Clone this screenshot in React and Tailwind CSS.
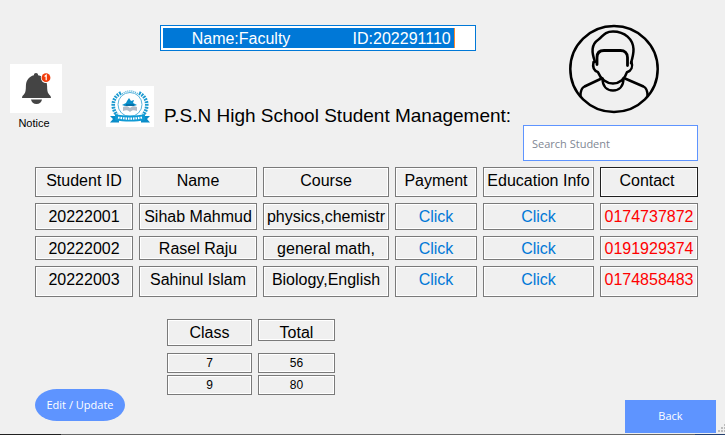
import React from "react";

const students = [
  { id: "20222001", name: "Sihab Mahmud", course: "physics,chemistr", contact: "0174737872", cell: "h-[27px] pt-[3px]" },
  { id: "20222002", name: "Rasel Raju", course: "general math, ", contact: "0191929374", cell: "h-[24px] pt-[2px]" },
  { id: "20222003", name: "Sahinul Islam", course: "Biology,English", contact: "0174858483", cell: "h-[31px] pt-[3px]" },
];

const classes = [
  { name: "7", total: "56" },
  { name: "9", total: "80" },
];

const box =
  "border border-[#7a7a7a] shadow-[inset_0_0_0_1px_#ffffff] text-center align-top font-normal whitespace-nowrap";

function Bell() {
  return (
    <svg viewBox="0 0 52 49" className="block h-[49px] w-[52px] bg-white" aria-hidden="true">
      <path
        d="M26 9c1.300 0 2 .9 2.100 2.300 5.500 1.200 8.900 5 9 10.700.1 4 .3 6 1.500 7.800.8 1.200 2.400 2.200 2.400 4.200H12c0-2 1.600-3 2.400-4.200 1.200-1.800 1.400-3.800 1.500-7.800.1-5.700 3.100-9.500 8-10.700C24 9.900 24.700 9 26 9Z"
        fill="#444"
      />
      <path d="M21 35.500h11c-.4 2.700-2.500 4.500-5.500 4.500S21.400 38.200 21 35.500Z" fill="#444" />
      <circle cx="36" cy="13.700" r="5.200" fill="#fff" />
      <circle cx="36" cy="13.700" r="4.400" fill="#f23c0a" />
      <path d="M34.600 12.500l1.600-1.200v4.900" stroke="#fff" strokeWidth="1.200" fill="none" />
    </svg>
  );
}

function Crest() {
  return (
    <svg viewBox="0 0 48 41" className="block h-[41px] w-[48px] shrink-0 bg-white" aria-hidden="true">
      <g fill="none" stroke="#1c9ad0">
        <circle cx="24" cy="18.500" r="12" strokeWidth="1" stroke="#58b4dc" />
        <path d="M15 7C6 11 5 22 11 29" strokeWidth="3.600" strokeDasharray="1.800 1" />
        <path d="M33 7c9 4 10 15 4 22" strokeWidth="3.600" strokeDasharray="1.800 1" />
        <path d="M16 8c5-4 11-4 16 0" strokeWidth="1.500" strokeDasharray="1 1" stroke="#58b4dc" />
      </g>
      <path d="M23 12l2 3 3-1-1 3 4 2-3 1H19l-3-1 4-2 1-2z" fill="#0a8fca" />
      <path d="M17 21c3-1 5-1 7 1 2-2 4-2 7-1v4c-3-1-5-1-7 1-2-2-4-2-7-1z" fill="#b3bcc8" />
      <path d="M20 18h8v2h-8z" fill="#0871a8" />
      <path d="M11 30H4l3 3-3 3.500h9V33zM37 30h7l-3 3 3 3.500h-9V33z" fill="#0a8cc8" />
      <path d="M9 28c9 2 21 2 30 0v6c-9 2-21 2-30 0z" fill="#119bd5" />
      <path d="M12 31.500c8 1.500 16 1.500 24 0" stroke="#fff" strokeWidth="2.200" strokeDasharray="1.600 .9" fill="none" />
    </svg>
  );
}

function Avatar() {
  return (
    <svg
      viewBox="0 0 90 90"
      className="ml-[7px] block h-[90px] w-[90px]"
      fill="none"
      stroke="#000"
      strokeWidth="2.500"
      strokeLinecap="round"
      strokeLinejoin="round"
      aria-hidden="true"
    >
      <ellipse cx="45" cy="45" rx="43.700" ry="43" />
      <path d="M26 38C22.500 28 22 20.500 29.500 15.500 34 12.500 35 7.500 44 7.500c12 0 20 8 20.500 17.500.2 5-1 9-2.500 14" />
      <path d="M28 40.500V33.500c0-5 3-7 7-7h16.500c4 0 7 2.500 7 7v8" strokeWidth="2.800" />
      <path d="M24.500 38c-1 4.500 0 8.500 4.500 10.200C31.500 55 38 59.500 44 59.500S56 55 58 48.200c4.500-1.500 6-5.700 4.500-10.200" />
      <path d="M33.500 54.500c0 8 4.500 12 10.500 12s10.500-4 10.500-12" />
      <path d="M32.500 54.500L15.500 62.500c-3 1.500-4 4-4 9M56 54.500L74.500 62.500c3 1.500 4 4 4 9" />
    </svg>
  );
}

function Grip() {
  return (
    <svg viewBox="0 0 7 9" className="mb-[2px] block h-[9px] w-[7px]" fill="#bcbcbc" aria-hidden="true">
      <path d="M0 7h2v2H0zM3 7h2v2H3zM6 7h1v2H6zM3 4h2v2H3zM6 4h1v2H6zM6 1h1v2H6z" />
    </svg>
  );
}

export default function App() {
  return (
    <div className="flex min-h-screen flex-col bg-[#f0f0f0] font-['Liberation_Sans',Arial,sans-serif] text-black">
      <header className="flex items-start pr-[27px] pl-[10px]">
        <div className="w-[52px] shrink-0 pt-[64px] text-center">
          <Bell />
          <p className="pt-[3px] pr-[4px] text-[11px] leading-[14px]">Notice</p>
        </div>

        <div className="ml-[44px] flex-1 pt-[25px]">
          <div className="ml-[54px] h-[26px] w-[316px] border border-[#0078d7] bg-white p-[2px]">
            <input
              aria-label="Faculty name and ID"
              readOnly
              defaultValue={"      Name:Faculty              ID:202291110"}
              className="block h-[20px] w-[292px] border-r border-[#ff8728] bg-[#0078d7] pt-[2px] pl-[2px] text-[16px] leading-[18px] text-white outline-none"
            />
          </div>
          <div className="flex items-start gap-[10px] pt-[35px]">
            <Crest />
            <h1 className="pt-[18px] text-[19px] leading-[24px] whitespace-nowrap">
              P.S.N High School Student Management:
            </h1>
          </div>
        </div>

        <div className="flex w-[175px] shrink-0 flex-col items-center pt-[24px]">
          <Avatar />
          <input
            type="search"
            aria-label="Search Student"
            placeholder="Search Student"
            className="mt-[11px] h-[36px] w-full border border-[#5e94ff] bg-white px-2 font-['Open_Sans','Noto_Sans',sans-serif] text-[11px] outline-none placeholder:text-[#7f8794]"
          />
        </div>
      </header>

      <div className="pr-[21px] pl-[29px]">
        <table className="w-full table-fixed border-separate border-spacing-[6px] text-[16px] leading-[20px]">
          <colgroup>
            <col className="w-[98px]" />
            <col className="w-[118px]" />
            <col className="w-[126px]" />
            <col className="w-[82px]" />
            <col className="w-[111px]" />
            <col className="w-[98px]" />
          </colgroup>
          <thead>
            <tr>
              {["Student ID", "Name", "Course", "Payment", "Education Info"].map((title) => (
                <th key={title} scope="col" className={`${box} h-[30px] p-0 pt-[3px]`}>
                  {title}
                </th>
              ))}
              <th
                scope="col"
                className="h-[30px] border border-[#202020] p-0 pt-[3px] pr-1 text-center align-top font-normal whitespace-nowrap shadow-[inset_0_0_0_1px_#ffffff]"
              >
                Contact
              </th>
            </tr>
          </thead>
          <tbody>
            {students.map((s) => (
              <tr key={s.id}>
                <td className={`${box} p-0 ${s.cell}`}>{s.id}</td>
                <td className={`${box} p-0 ${s.cell}`}>{s.name}</td>
                <td className={`${box} p-0 ${s.cell}`}>{s.course}</td>
                <td className={`${box} p-0 ${s.cell}`}>
                  <a href="#payment" className="text-[#0078d7]">Click</a>
                </td>
                <td className={`${box} p-0 ${s.cell}`}>
                  <a href="#education" className="text-[#0078d7]">Click</a>
                </td>
                <td className={`${box} p-0 text-[#ff0000] ${s.cell}`}>{s.contact}</td>
              </tr>
            ))}
          </tbody>
        </table>
      </div>

      <footer className="flex flex-1 items-end pl-[35px]">
        <button
          type="button"
          className="mb-[13px] h-[32px] w-[90px] rounded-[22px/16px] bg-[#5e94ff] font-['Open_Sans','Noto_Sans',sans-serif] text-[11px] whitespace-nowrap text-white"
        >
          Edit / Update
        </button>
        <table className="mt-[14px] ml-[36px] table-fixed self-start border-separate border-spacing-x-[6px] border-spacing-y-[2px] text-[12px] leading-[18px]">
          <thead className="text-[16px] leading-[20px]">
            <tr>
              <th scope="col" className="w-[85px] p-0 pb-[5px] align-top">
                <div className={`${box} h-[27px] pt-[3px]`}>Class</div>
              </th>
              <th scope="col" className="w-[77px] p-0 pb-[5px] align-top">
                <div className={`${box} h-[22px] pt-[3px]`}>Total</div>
              </th>
            </tr>
          </thead>
          <tbody>
            {classes.map((c) => (
              <tr key={c.name}>
                <td className={`${box} h-[20px] p-0`}>{c.name}</td>
                <td className={`${box} h-[20px] p-0`}>{c.total}</td>
              </tr>
            ))}
          </tbody>
        </table>
        <button
          type="button"
          className="mr-[2px] mb-px ml-auto h-[33px] w-[91px] bg-[#5e94ff] font-['Open_Sans','Noto_Sans',sans-serif] text-[11px] text-white"
        >
          Back
        </button>
        <Grip />
      </footer>
      <div className="flex h-px bg-[#666666]">
        <span className="w-[61px] bg-[#202020]" />
        <span className="ml-auto w-[30px] bg-[#25406f]" />
      </div>
    </div>
  );
}
